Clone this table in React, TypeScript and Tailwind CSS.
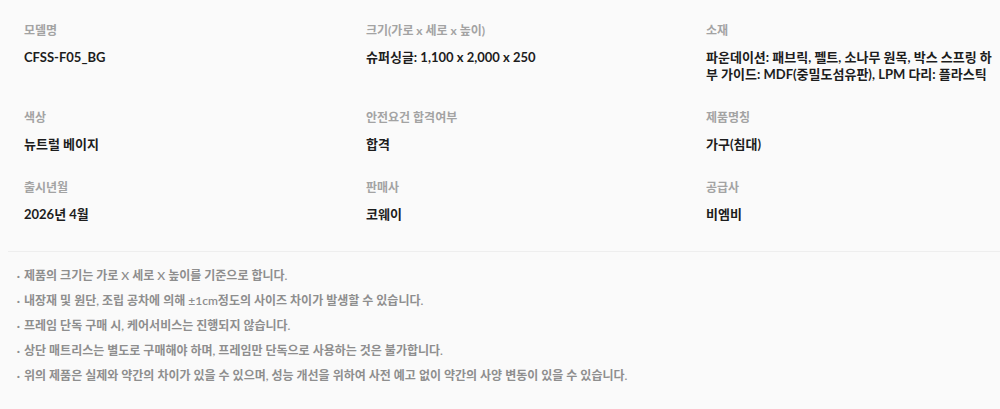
const SPECS: { label: string; value: string }[] = [
  { label: "모델명", value: "CFSS-F05_BG" },
  { label: "크기(가로 x 세로 x 높이)", value: "슈퍼싱글: 1,100 x 2,000 x 250" },
  {
    label: "소재",
    value: "파운데이션: 패브릭, 펠트, 소나무 원목, 박스 스프링 하부 가이드: MDF(중밀도섬유판), LPM 다리: 플라스틱",
  },
  { label: "색상", value: "뉴트럴 베이지" },
  { label: "안전요건 합격여부", value: "합격" },
  { label: "제품명칭", value: "가구(침대)" },
  { label: "출시년월", value: "2026년 4월" },
  { label: "판매사", value: "코웨이" },
  { label: "공급사", value: "비엠비" },
];

const NOTES = [
  "제품의 크기는 가로 X 세로 X 높이를 기준으로 합니다.",
  "내장재 및 원단, 조립 공차에 의해 ±1cm정도의 사이즈 차이가 발생할 수 있습니다.",
  "프레임 단독 구매 시, 케어서비스는 진행되지 않습니다.",
  "상단 매트리스는 별도로 구매해야 하며, 프레임만 단독으로 사용하는 것은 불가합니다.",
  "위의 제품은 실제와 약간의 차이가 있을 수 있으며, 성능 개선을 위하여 사전 예고 없이 약간의 사양 변동이 있을 수 있습니다.",
];

export default function App() {
  return (
    <div
      className="w-[1000px] h-[409px] bg-[#fafafa] overflow-hidden"
      style={{ fontFamily: "Lato, 'Noto Sans CJK KR', sans-serif" }}
    >
      <div className="ml-2 border-b border-[#eeeeee] pt-[22px] pb-[28px] pl-4">
        <div className="grid grid-cols-[342px_340px_290px] gap-y-[26px]">
          {SPECS.map((spec) => (
            <div key={spec.label} className="flex flex-col">
              <span className="text-[12px] leading-[18px] font-bold text-[#a3a3a3]">
                {spec.label}
              </span>
              <span className="mt-[9px] text-[13px] leading-[17px] font-bold text-[#1d1d1d]">
                {spec.value}
              </span>
            </div>
          ))}
        </div>
      </div>

      <ul className="pt-[11px] pl-[13px] flex flex-col">
        {NOTES.map((note) => (
          <li
            key={note}
            className="flex items-center h-[25px] text-[12px] font-semibold text-[#8e8e8e]"
          >
            <span className="w-[11px] text-center font-bold">·</span>
            <span>{note}</span>
          </li>
        ))}
      </ul>
    </div>
  );
}
